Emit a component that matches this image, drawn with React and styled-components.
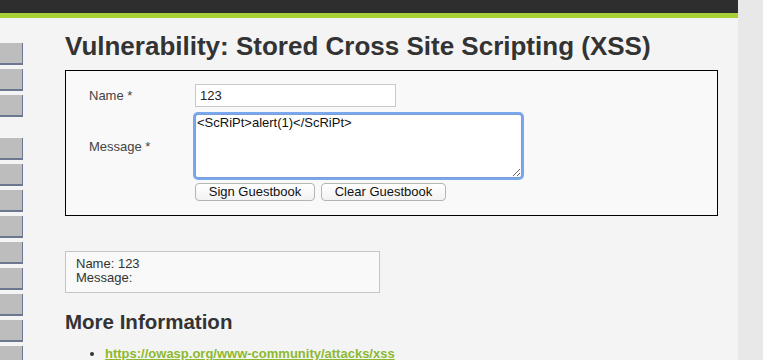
import styled, { createGlobalStyle } from "styled-components";

const GlobalStyle = createGlobalStyle`
  html, body {
    margin: 0;
    padding: 0;
    background: #e8e8e8;
    font-family: "Liberation Sans", Arial, sans-serif;
    color: #333;
  }
`;

const Page = styled.div`
  display: flex;
  min-height: 360px;
  overflow: hidden;
`;

const Container = styled.div`
  width: 738px;
  flex-shrink: 0;
  background: #f4f4f4;
  min-height: 360px;
`;

const Header = styled.div`
  height: 13px;
  background: #2e2e2e;
  border-bottom: 5px solid #a6cf38;
`;

const Body = styled.div`
  display: flex;
`;

const Nav = styled.div`
  width: 23px;
  padding-top: 25px;
  display: flex;
  flex-direction: column;
`;

const NavGroup = styled.div`
  display: flex;
  flex-direction: column;
  gap: 4px;
  margin-bottom: ${(p) => (p.$last ? 0 : "21px")};
`;

const NavButton = styled.div`
  height: 20px;
  background: #bdbdbd;
  border-right: 1px solid #6d7890;
  border-bottom: 2px solid #6d7890;
`;

const Main = styled.div`
  flex: 1;
  padding-left: 42px;
  padding-right: 20px;
`;

const Title = styled.h1`
  margin: 12px 0 0;
  font-size: 26px;
  line-height: 32px;
  font-weight: bold;
  color: #333;
  white-space: nowrap;
`;

const FormBox = styled.div`
  margin-top: 8px;
  width: 651px;
  height: 144px;
  border: 1px solid #000;
  background: #f8f9f8;
`;

const FormGrid = styled.div`
  display: grid;
  grid-template-columns: 106px auto;
  padding: 13px 0 0 23px;
  row-gap: 6px;
  align-items: center;
`;

const Label = styled.div`
  font-size: 13px;
  color: #444;
`;

const TextInput = styled.input`
  width: 201px;
  height: 23px;
  box-sizing: border-box;
  border: 1px solid #c8c8c8;
  background: #fff;
  font-family: "Liberation Sans", Arial, sans-serif;
  font-size: 13px;
  color: #222;
  padding: 2px 4px;
  margin: 0;
  outline: none;
`;

const TextArea = styled.textarea`
  display: block;
  width: 327px;
  height: 64px;
  box-sizing: border-box;
  border: 1px solid #7a9ed6;
  border-radius: 3px;
  box-shadow: 0 0 0 2px #7aa8ef;
  background: #fff;
  font-family: "Liberation Sans", Arial, sans-serif;
  font-size: 13px;
  color: #111;
  padding: 0 1px;
  margin: 1px 0;
  outline: none;
  resize: vertical;
`;

const Buttons = styled.div`
  display: flex;
  gap: 6px;
  margin-top: -2px;
`;

const Button = styled.button`
  height: 18px;
  padding: 0 10px;
  border: 1px solid #b4b4b4;
  border-radius: 4px;
  background: linear-gradient(#ffffff, #f2f2f2);
  font-family: "Liberation Sans", Arial, sans-serif;
  font-size: 13px;
  line-height: 16px;
  color: #111;
  width: ${(p) => p.$w}px;
`;

const Entry = styled.div`
  margin-top: 35px;
  width: 303px;
  border: 1px solid #c4c4c4;
  background: #f8f9f8;
  padding: 5px 0 7px 10px;
  font-size: 13px;
  line-height: 14px;
  color: #333;
`;

const SubTitle = styled.h2`
  margin: 17px 0 0;
  font-size: 20.5px;
  line-height: 24px;
  font-weight: bold;
  color: #333;
`;

const List = styled.ul`
  margin: 12px 0 0;
  padding-left: 40px;
  font-size: 13px;
`;

const Link = styled.a`
  color: #8cb92e;
  font-weight: bold;
  text-decoration: underline;
`;

export default function App() {
  return (
    <>
      <GlobalStyle />
      <Page>
        <Container>
          <Header />
          <Body>
            <Nav>
              <NavGroup>
                {[0, 1, 2].map((i) => (
                  <NavButton key={i} />
                ))}
              </NavGroup>
              <NavGroup $last>
                {[0, 1, 2, 3, 4, 5, 6, 7, 8].map((i) => (
                  <NavButton key={i} />
                ))}
              </NavGroup>
            </Nav>
            <Main>
              <Title>Vulnerability: Stored Cross Site Scripting (XSS)</Title>
              <FormBox>
                <FormGrid>
                  <Label>Name *</Label>
                  <TextInput defaultValue="123" />
                  <Label>Message *</Label>
                  <TextArea defaultValue="<ScRiPt>alert(1)</ScRiPt>" />
                  <div />
                  <Buttons>
                    <Button $w={120}>Sign Guestbook</Button>
                    <Button $w={125}>Clear Guestbook</Button>
                  </Buttons>
                </FormGrid>
              </FormBox>
              <Entry>
                Name: 123
                <br />
                Message:
              </Entry>
              <SubTitle>More Information</SubTitle>
              <List>
                <li>
                  <Link href="#">https://owasp.org/www-community/attacks/xss</Link>
                </li>
              </List>
            </Main>
          </Body>
        </Container>
      </Page>
    </>
  );
}
